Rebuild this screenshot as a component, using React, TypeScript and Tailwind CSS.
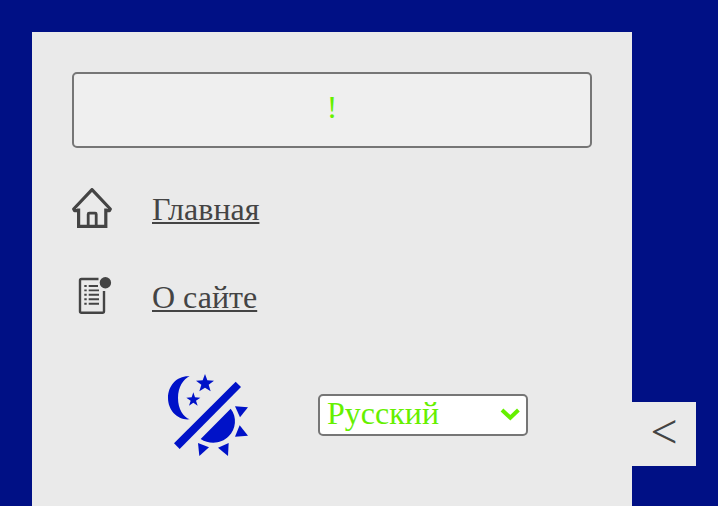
import React from 'react';

function HomeIcon() {
  return (
    <svg className="block h-10 w-10 shrink-0" viewBox="0 0 40 40" fill="none" stroke="#444" strokeWidth="3.2">
      <path d="M6.6 20.5V38.4H33.8V20.5" />
      <path d="M6.6 22.6L2.6 22.6L1.7 21L20 1.6L38.3 21L37.4 22.6L33.8 22.6" strokeLinejoin="round" />
      <path d="M16.2 38V26.2Q16.2 25.2 17.2 25.2H23.2Q24.2 25.2 24.2 26.2V38" strokeWidth="2.8" />
    </svg>
  );
}

function AboutIcon() {
  return (
    <svg className="block h-10 w-10 shrink-0" viewBox="0 0 40 40" fill="none" stroke="#444">
      <path d="M26.5 3H9.5Q8 3 8 4.5V35.2Q8 36.7 9.5 36.7H30.5Q32 36.7 32 35.2V15" strokeWidth="2.4" />
      <circle cx="33.4" cy="6.7" r="5.7" fill="#444" stroke="none" />
      <path
        d="M12.3 10H14.7M16.7 10H26M12.3 14.4H14.7M16.7 14.4H27M12.3 18.8H14.7M16.7 18.8H27M12.3 23.2H14.7M16.7 23.2H27M12.3 27.8H14.7M16.7 27.8H27"
        strokeWidth="1.9"
      />
    </svg>
  );
}

function ThemeIcon() {
  return (
    <svg className="block h-24 w-24" viewBox="0 0 288 288" fill="#0012c8">
      <path d="M89 25C53 22 24 51 24 90C24 128 54 158 89 154C70 147 54 124 54 90C54 57 70 33 89 25Z" />
      <path d="M135 18L142 37L162 38L146 50L152 70L135 59L118 70L124 50L108 38L128 37Z" />
      <path d="M100 73L105 88L121 89L108 98L113 113L100 104L87 113L92 98L79 89L95 88Z" />
      <path d="M227 41L243 57L59 243L42 226Z" />
      <path d="M212 122C232 147 228 184 206 205C184 228 148 230 122 213Z" />
      <path d="M225 115L264 118L240 148Z" />
      <path d="M239 172L264 203L225 206Z" />
      <path d="M114 225L147 238L118 264Z" />
      <path d="M174 239L206 225L204 264Z" />
    </svg>
  );
}

function NavLink({ icon, label }: { icon: React.ReactNode; label: string }) {
  return (
    <a href="#" className="flex h-10 items-center gap-10 text-[#444]">
      {icon}
      <span className="pt-0.5 leading-10 underline decoration-2 underline-offset-2">{label}</span>
    </a>
  );
}

export default function App() {
  return (
    <div className="flex h-[506px] w-[718px] overflow-hidden bg-[#001085] pt-8 pl-8 font-['Liberation_Serif',serif] text-[32px] leading-9">
      <aside className="flex w-[600px] shrink-0 flex-col bg-[#eaeaea] px-10 pt-10">
        <button className="h-[76px] shrink-0 rounded-[5px] border-2 border-[#767676] bg-[#efefef] pb-1.5 text-[#66f000]">!</button>
        <nav className="mt-10 flex flex-col gap-12">
          <NavLink icon={<HomeIcon />} label="Главная" />
          <NavLink icon={<AboutIcon />} label="О сайте" />
        </nav>
        <div className="mt-[52px] flex items-start pl-[88px]">
          <button className="block" aria-label="Theme">
            <ThemeIcon />
          </button>
          <button className="mt-[26px] ml-[62px] flex h-[42px] w-[210px] items-center justify-between rounded-[5px] border-2 border-[#767676] bg-white pr-1.5 pl-[7px] text-[#66f000]">
            <span className="pb-1">Русский</span>
            <svg className="block h-5 w-5" viewBox="0 0 20 20" fill="none" stroke="#66f000" strokeWidth="4">
              <path d="M2 5L10.3 12.7L18.4 5" />
            </svg>
          </button>
        </div>
      </aside>
      <button className="mt-[370px] h-16 w-16 shrink-0 bg-[#eaeaea] pb-1 text-[48px] leading-[60px] text-[#444]">&lt;</button>
    </div>
  );
}
